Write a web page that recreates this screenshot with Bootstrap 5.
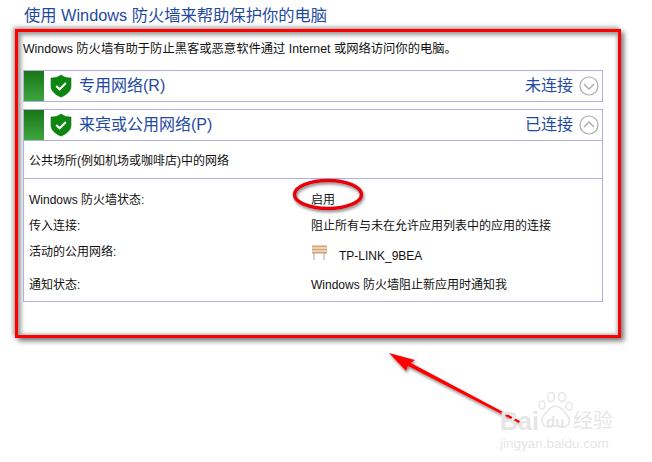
<!DOCTYPE html>
<html lang="zh-CN">
<head>
  <meta charset="UTF-8">
  <title>Windows 防火墙</title>
  <meta name="viewport" content="width=device-width, initial-scale=1">
  <link href="https://cdn.jsdelivr.net/npm/bootstrap@5.3.0/dist/css/bootstrap.min.css" rel="stylesheet">
  <style>
    html, body { height: 100%; }
    body { width: 652px; height: 462px; overflow: hidden; position: relative; background: #fff; font-family: "Liberation Sans", "Noto Sans CJK SC", sans-serif; font-size: 12px; color: #111; }
    .fw-title { margin: 0 0 0 24px; height: 29px; padding-top: 4px; font-size: 16.3px; line-height: 22px; color: #1f4aa0; font-weight: 400; }
    .fw-frame { margin-left: 15px; width: 606px; height: 309px; border: 3px solid #f00; padding: 8px 15px 0 5px; box-shadow: 3px 3px 5px #777, -2px -2px 4px #aaa, inset 3px 3px 4px #999, inset -2px -2px 3px #ccc; }
    .fw-intro { height: 30px; font-size: 12.3px; line-height: 18px; white-space: nowrap; }
    .fw-panel { border: 1px solid #aeb0dc; }
    .fw-head { height: 30px; }
    .fw-stripe { width: 20px; align-self: stretch; background: linear-gradient(#187518, #3ea63e); }
    .fw-shield { margin-left: 6px; }
    .fw-name { font-size: 16px; color: #1f4aa0; margin-left: 7px; }
    .fw-state { font-size: 16px; color: #1f4aa0; margin-right: 6px; }
    .fw-toggle { margin-right: 3px; }
    .fw-gap { margin-top: 7px; }
    .fw-desc { height: 39px; padding: 2px 0 0 5px; border-top: 1px solid #aeb0dc; border-bottom: 1px solid #aeb0dc; }
    .fw-rows { padding: 10px 0 6px 5px; height: 122px; }
    .fw-row { height: 26px; line-height: 23px; }
    .fw-row-net { height: 33px; }
    .fw-key { width: 282px; flex: none; }
    .fw-wifi { margin-left: 11px; margin-top: 4px; }
    .fw-note { position: absolute; left: 0; top: 0; pointer-events: none; }
    .fw-mark { position: absolute; left: 500px; top: 392px; width: 118px; height: 60px; color: #e6e6e6; }
    .fw-mark-bai { position: absolute; left: 0; top: 16px; font-weight: 700; font-size: 25px; line-height: 26px; }
    .fw-mark-du { position: absolute; left: 46px; top: 22px; font-weight: 700; font-size: 15px; line-height: 16px; }
    .fw-mark-cn { position: absolute; left: 73px; top: 16px; font-size: 20px; line-height: 26px; }
    .fw-mark-url { position: absolute; left: 0; top: 44px; font-size: 13.5px; line-height: 16px; white-space: nowrap; }
    .fw-paw { position: absolute; left: 38px; top: 0; }
  </style>
</head>
<body>

<h1 class="fw-title">使用 Windows 防火墙来帮助保护你的电脑</h1>

<div class="fw-frame">
  <div class="fw-intro">Windows 防火墙有助于防止黑客或恶意软件通过 Internet 或网络访问你的电脑。</div>

  <div class="fw-panel d-flex align-items-center">
    <div class="fw-stripe"></div>
    <svg class="fw-shield" width="22" height="24" viewBox="0 0 24 25"><path d="M12 .5c3 2.4 6.5 3.4 10.8 3.4v9c0 5.2-4.5 9-10.8 11.600C5.700 21.900 1.200 18.100 1.200 12.900v-9C5.500 3.900 9 2.900 12 .5z" fill="#0b860f" stroke="#0a6a0d" stroke-width=".8"/><path d="M6.800 12.500l3.700 3.600 6.800-6.800" fill="none" stroke="#fff" stroke-width="2.300"/></svg>
    <span class="fw-name fw-head d-flex align-items-center">专用网络(R)</span>
    <span class="fw-state ms-auto">未连接</span>
    <svg class="fw-toggle" width="20" height="20" viewBox="0 0 20 20"><circle cx="10" cy="10" r="9" fill="#fff" stroke="#aaa" stroke-width="1.200"/><path d="M5 8l5 5 5-5" fill="none" stroke="#aaa" stroke-width="1.400"/></svg>
  </div>

  <div class="fw-panel fw-gap">
    <div class="d-flex align-items-center fw-head">
      <div class="fw-stripe"></div>
      <svg class="fw-shield" width="22" height="24" viewBox="0 0 24 25"><path d="M12 .5c3 2.4 6.5 3.4 10.8 3.4v9c0 5.2-4.5 9-10.8 11.600C5.700 21.900 1.200 18.100 1.200 12.900v-9C5.500 3.900 9 2.900 12 .5z" fill="#0b860f" stroke="#0a6a0d" stroke-width=".8"/><path d="M6.800 12.500l3.700 3.600 6.800-6.800" fill="none" stroke="#fff" stroke-width="2.300"/></svg>
      <span class="fw-name">来宾或公用网络(P)</span>
      <span class="fw-state ms-auto">已连接</span>
      <svg class="fw-toggle" width="20" height="20" viewBox="0 0 20 20"><circle cx="10" cy="10" r="9" fill="#fff" stroke="#aaa" stroke-width="1.200"/><path d="M5 12l5-5 5 5" fill="none" stroke="#aaa" stroke-width="1.400"/></svg>
    </div>
    <div class="fw-desc d-flex align-items-center">公共场所(例如机场或咖啡店)中的网络</div>
    <div class="fw-rows">
      <div class="d-flex fw-row"><div class="fw-key">Windows 防火墙状态:</div><div>启用</div></div>
      <div class="d-flex fw-row"><div class="fw-key">传入连接:</div><div>阻止所有与未在允许应用列表中的应用的连接</div></div>
      <div class="d-flex fw-row fw-row-net">
        <div class="fw-key">活动的公用网络:</div>
        <svg class="mt-1" width="17" height="16" viewBox="0 0 17 16"><path d="M3 8v7M13 8v7" stroke="#b4bccb" stroke-width="1.300"/><path d="M1 1.500h15M1 4.500h15M1 7.500h15" stroke="#d6a371" stroke-width="2"/></svg>
        <div class="fw-wifi">TP-LINK_9BEA</div>
      </div>
      <div class="d-flex fw-row"><div class="fw-key">通知状态:</div><div>Windows 防火墙阻止新应用时通知我</div></div>
    </div>
  </div>
</div>

<svg class="fw-note" width="652" height="462" viewBox="0 0 652 462">
  <defs><filter id="fw-shadow" x="-20%" y="-20%" width="140%" height="140%"><feDropShadow dx="1" dy="2" stdDeviation="1.500" flood-color="#555" flood-opacity=".7"/></filter></defs>
  <ellipse cx="328" cy="194.500" rx="33.500" ry="14" fill="none" stroke="#e8000b" stroke-width="3.500" filter="url(#fw-shadow)"/>
  <path d="M389 353l26 7-4 3 109 58-1 2-111-57-2 5z" fill="#f00" filter="url(#fw-shadow)"/>
</svg>

<div class="fw-mark">
  <svg class="fw-paw" width="35" height="38" viewBox="0 0 35 38" fill="none" stroke="#e6e6e6" stroke-width="1.500">
    <ellipse cx="4" cy="13" rx="3" ry="4"/><ellipse cx="13" cy="5" rx="3.500" ry="4.500"/><ellipse cx="24" cy="5" rx="3.500" ry="4.500"/><ellipse cx="31" cy="14" rx="3" ry="4"/>
    <path d="M17 14c-5 0-7 5-11 9-4 5-2 12 5 12 3 0 4-1 7-1s5 2 8 1c6-1 7-7 3-12-4-4-6-9-12-9z"/>
  </svg>
  <span class="fw-mark-bai">Bai</span>
  <span class="fw-mark-du">du</span>
  <span class="fw-mark-cn">经验</span>
  <span class="fw-mark-url">jingyan.baidu.com</span>
</div>

</body>
</html>
